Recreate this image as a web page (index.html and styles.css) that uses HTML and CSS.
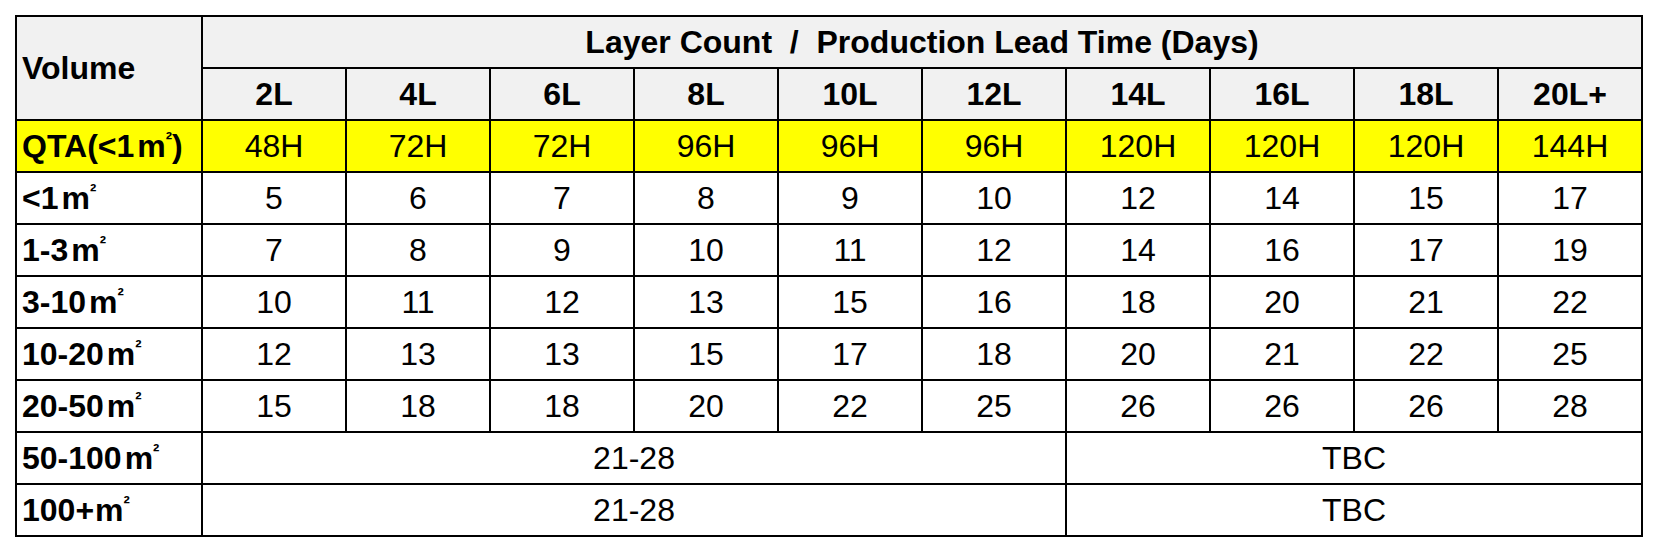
FILE: index.html
```html
<!DOCTYPE html>
<html lang="en">
<head>
    <meta charset="UTF-8">
    <meta name="viewport" content="width=device-width, initial-scale=1.0">
    <title>Production Lead Time</title>
    <link rel="stylesheet" href="styles.css">
</head>
<body>
    <table class="lead-table">
        <colgroup>
            <col class="col-volume">
            <col span="10" class="col-layer">
        </colgroup>
        <thead>
            <tr>
                <th rowspan="2" class="row-label">Volume</th>
                <th colspan="10" class="title">Layer Count&nbsp; /&nbsp; Production Lead Time (Days)</th>
            </tr>
            <tr>
                <th>2L</th>
                <th>4L</th>
                <th>6L</th>
                <th>8L</th>
                <th>10L</th>
                <th>12L</th>
                <th>14L</th>
                <th>16L</th>
                <th>18L</th>
                <th>20L+</th>
            </tr>
        </thead>
        <tbody>
            <tr class="qta">
                <th class="row-label">QTA(&lt;1<span class="unit">m<sup>²</sup></span>)</th>
                <td>48H</td><td>72H</td><td>72H</td><td>96H</td><td>96H</td>
                <td>96H</td><td>120H</td><td>120H</td><td>120H</td><td>144H</td>
            </tr>
            <tr>
                <th class="row-label">&lt;1<span class="unit">m<sup>²</sup></span></th>
                <td>5</td><td>6</td><td>7</td><td>8</td><td>9</td>
                <td>10</td><td>12</td><td>14</td><td>15</td><td>17</td>
            </tr>
            <tr>
                <th class="row-label">1-3<span class="unit">m<sup>²</sup></span></th>
                <td>7</td><td>8</td><td>9</td><td>10</td><td>11</td>
                <td>12</td><td>14</td><td>16</td><td>17</td><td>19</td>
            </tr>
            <tr>
                <th class="row-label">3-10<span class="unit">m<sup>²</sup></span></th>
                <td>10</td><td>11</td><td>12</td><td>13</td><td>15</td>
                <td>16</td><td>18</td><td>20</td><td>21</td><td>22</td>
            </tr>
            <tr>
                <th class="row-label">10-20<span class="unit">m<sup>²</sup></span></th>
                <td>12</td><td>13</td><td>13</td><td>15</td><td>17</td>
                <td>18</td><td>20</td><td>21</td><td>22</td><td>25</td>
            </tr>
            <tr>
                <th class="row-label">20-50<span class="unit">m<sup>²</sup></span></th>
                <td>15</td><td>18</td><td>18</td><td>20</td><td>22</td>
                <td>25</td><td>26</td><td>26</td><td>26</td><td>28</td>
            </tr>
            <tr>
                <th class="row-label">50-100<span class="unit">m<sup>²</sup></span></th>
                <td colspan="6">21-28</td>
                <td colspan="4">TBC</td>
            </tr>
            <tr>
                <th class="row-label">100+<span class="unit tight">m<sup>²</sup></span></th>
                <td colspan="6">21-28</td>
                <td colspan="4">TBC</td>
            </tr>
        </tbody>
    </table>
</body>
</html>
```

FILE: styles.css
```css
body {
    margin: 0;
    padding: 15px;
    background-color: #fff;
    font-family: "Liberation Sans", Arial, sans-serif;
    color: #000;
}
.lead-table {
    border-collapse: collapse;
    width: 1628px;
    table-layout: fixed;
}
.col-volume {
    width: 186px;
}
.lead-table th,
.lead-table td {
    border: 2px solid #000;
    height: 50px;
    padding: 0;
    text-align: center;
    vertical-align: middle;
    font-size: 32px;
    line-height: 1;
}
.lead-table th {
    font-weight: bold;
}
.lead-table td {
    font-weight: normal;
}
.lead-table thead th {
    background-color: #f1f1f1;
}
.lead-table .row-label {
    text-align: left;
    padding-left: 5px;
}
.lead-table .qta th,
.lead-table .qta td {
    background-color: #ffff00;
}
.unit {
    margin-left: 3px;
}
.unit.tight {
    margin-left: 1px;
}
.unit sup {
    font-size: 19px;
    line-height: 0;
    vertical-align: 11px;
}
```
